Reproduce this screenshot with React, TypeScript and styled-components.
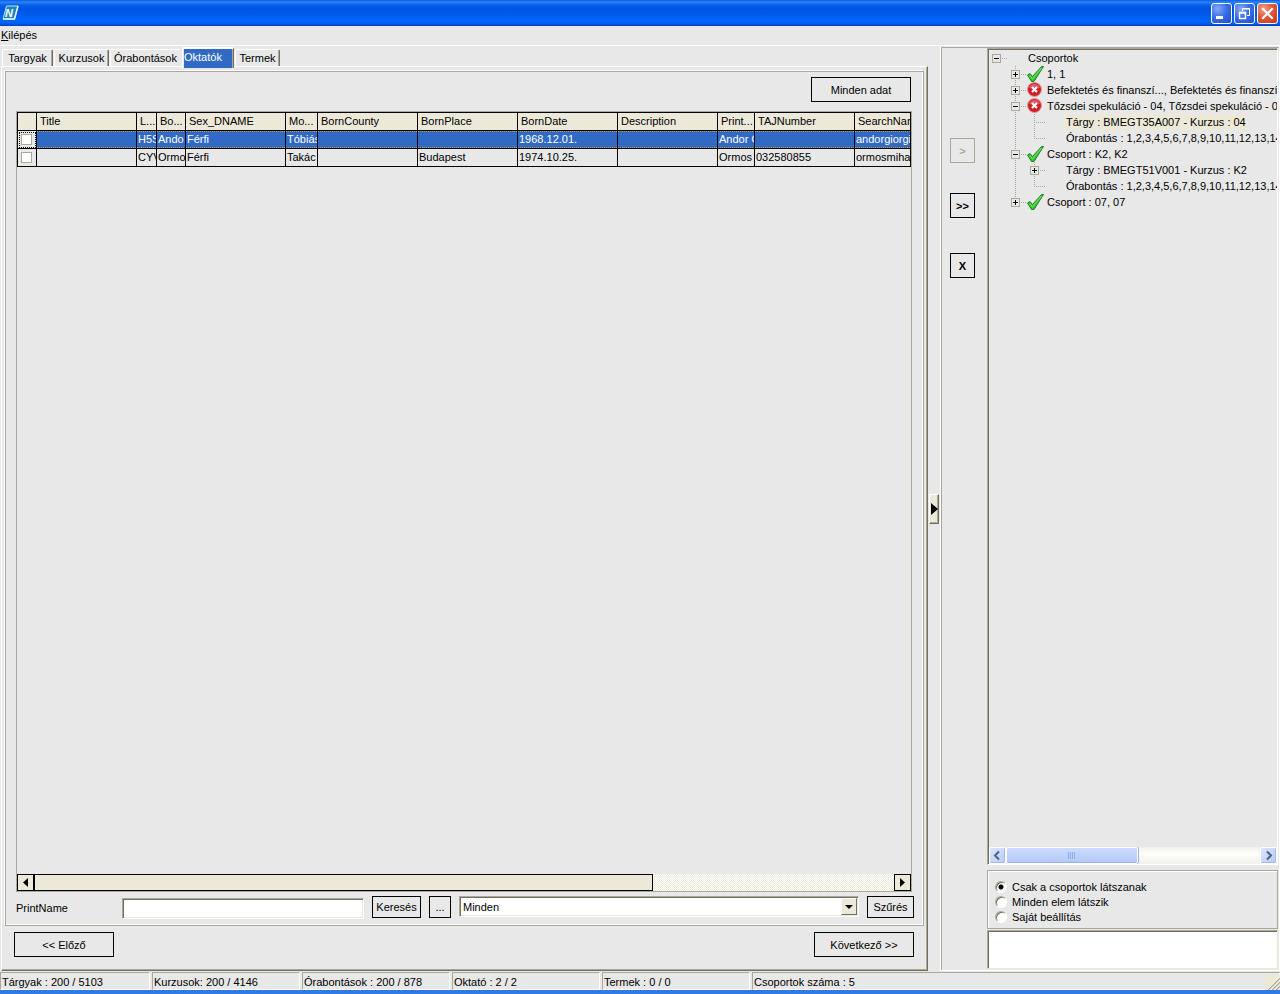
import React, { useState } from "react";
import styled, { createGlobalStyle, css } from "styled-components";

const c = {
  face: "#e8e8e8",
  beige: "#ece9d8",
  shadow: "#aca899",
  dark: "#716f64",
  blue: "#316ac5",
};

const Global = createGlobalStyle`
  * { box-sizing: border-box; }
  body { margin: 0; background: ${c.face}; }
  body, button, input, select, textarea {
    font-family: "Liberation Sans", Arial, sans-serif;
    font-size: 11px;
    line-height: 14px;
    color: #000;
  }
  button { padding: 0; margin: 0; }
`;

const Window = styled.div`
  display: flex;
  flex-direction: column;
  min-height: 100vh;
  overflow: hidden;
  background: ${c.face};
`;

/* ---------- title bar ---------- */

const TitleBar = styled.header`
  display: flex;
  align-items: center;
  gap: 2px;
  height: 26px;
  padding: 0 2px;
  background: linear-gradient(
    #0a5ae0 0%, #2c86fb 8%, #0a63ee 18%, #0054e3 32%, #0058ea 55%,
    #0066ff 78%, #0062f8 88%, #0040c4 100%
  );
`;

const Logo = styled.svg`
  width: 18px;
  height: 16px;
  margin-right: auto;
`;

const CaptionButton = styled.button<{ $close?: boolean }>`
  width: 21px;
  height: 21px;
  border: 1px solid #fff;
  border-radius: 3px;
  background: ${(p) =>
    p.$close
      ? "radial-gradient(circle at 30% 25%, #f0a08a, #e0573a 45%, #c8381a)"
      : "radial-gradient(circle at 30% 25%, #86a8f4, #3a6fe6 45%, #1c4ed0)"};
  svg { display: block; width: 19px; height: 19px; }
`;

const MenuBar = styled.nav`
  height: 20px;
  padding: 2px 1px;
  border-bottom: 1px solid #fff;
`;

const MenuItem = styled.button`
  border: 0;
  background: none;
`;

/* ---------- left side ---------- */

const Main = styled.main`
  display: flex;
  flex: 1;
`;

const LeftPane = styled.section`
  display: flex;
  flex-direction: column;
  flex: 1;
  min-width: 0;
  padding-left: 1px;
`;

const TabStrip = styled.div`
  display: flex;
  align-items: flex-end;
  gap: 1px;
  height: 20px;
  padding-left: 1px;
`;

const Tab = styled.button<{ $width: number; $active?: boolean; $flat?: boolean }>`
  width: ${(p) => p.$width}px;
  height: 17px;
  overflow: hidden;
  white-space: nowrap;
  background: ${c.face};
  border: solid;
  border-width: 1px 1px 0;
  border-color: #fff ${c.dark} #fff #fff;
  border-radius: 2px 2px 0 0;
  box-shadow: inset -1px 0 ${c.shadow};
  line-height: 17px;
  ${(p) => p.$flat && css`border-right-color: ${c.face}; box-shadow: none;`}
  ${(p) =>
    p.$active &&
    css`
      position: relative;
      height: 21px;
      margin-bottom: -2px;
      padding: 0 1px 3px;
      border-top-width: 2px;
      text-align: left;
      line-height: 16px;
      color: #fff;
      background: ${c.blue};
      box-shadow: inset 1px 0 ${c.face}, inset -1px 0 ${c.shadow};
    `}
`;

const TabPanel = styled.div`
  display: flex;
  flex-direction: column;
  flex: 1;
  padding: 3px 3px 13px 2px;
  border: 1px solid;
  border-color: #fff ${c.dark} ${c.dark} #fff;
  box-shadow: inset -1px -1px ${c.shadow};
`;

const Group = styled.div`
  display: flex;
  flex-direction: column;
  flex: 1;
  min-height: 0;
  padding: 6px 11px 0;
  border: 1px solid;
  border-color: #fff ${c.shadow} ${c.shadow} #fff;
  box-shadow: inset 1px 1px ${c.shadow}, inset -1px -1px #fff;
`;

const FlatButton = styled.button<{ $width: number; $height: number }>`
  flex: none;
  width: ${(p) => p.$width}px;
  height: ${(p) => p.$height}px;
  white-space: nowrap;
  border: 1px solid #000;
  background: ${c.face};
  &:disabled { color: ${c.shadow}; border-color: ${c.shadow}; }
`;

const GroupTop = styled.div`
  display: flex;
  justify-content: flex-end;
  padding: 0 1px 9px 0;
`;

const GridFrame = styled.div`
  display: flex;
  flex-direction: column;
  justify-content: space-between;
  flex: 1;
  border: 1px solid ${c.shadow};
`;

const Table = styled.table`
  width: 100%;
  table-layout: fixed;
  border-collapse: separate;
  border-spacing: 0;
  border: solid #000;
  border-width: 1px 0 0 1px;
`;

const Cell = styled.td`
  height: 18px;
  padding: 0 0 1px 1px;
  overflow: hidden;
  white-space: nowrap;
  text-align: left;
  font-weight: normal;
  border: solid #000;
  border-width: 0 1px 1px 0;
  line-height: 14px;
`;

const HeadCell = styled(Cell)`
  padding-left: 3px;
  background: ${c.beige};
`;

const Row = styled.tr<{ $selected?: boolean }>`
  ${(p) =>
    p.$selected &&
    css`
      ${Cell} {
        color: #fff;
        background:
          repeating-linear-gradient(90deg, #ce953a 0 1px, ${c.blue} 1px 2px) top / 100% 1px no-repeat,
          repeating-linear-gradient(90deg, #ce953a 0 1px, ${c.blue} 1px 2px) bottom / 100% 1px no-repeat,
          ${c.blue};
      }
      ${Cell}:first-child { background: ${c.face}; outline: 1px dotted #000; outline-offset: -2px; }
    `}
`;

const GridCheck = styled.input`
  appearance: none;
  display: block;
  width: 11px;
  height: 11px;
  margin: 1px 2px 0;
  border: 1px solid ${c.shadow};
  background: #fff;
`;

const GridScroll = styled.div`
  display: flex;
  height: 17px;
  background: repeating-conic-gradient(#fff 0 25%, ${c.beige} 0 50%) 0 0 / 2px 2px;
`;

const GridScrollTrack = styled.div`
  flex: 1;
`;

const GridScrollThumb = styled.div`
  width: 72%;
  height: 17px;
  border: 1px solid #000;
  background: ${c.beige};
`;

const GridScrollButton = styled.button`
  width: 17px;
  height: 17px;
  border: 1px solid #000;
  background: ${c.beige};
  svg { display: block; width: 15px; height: 15px; }
`;

const FilterRow = styled.div`
  display: flex;
  gap: 8px;
  height: 33px;
  margin-right: -2px;
  padding-top: 4px;
`;

const FieldLabel = styled.label`
  width: 98px;
  line-height: 24px;
`;

const sunken = css`
  border: 1px solid;
  border-color: ${c.shadow} #fff #fff ${c.shadow};
  box-shadow: inset 1px 1px ${c.dark}, inset -1px -1px ${c.beige};
`;

const TextInput = styled.input`
  ${sunken}
  flex: 1 1 242px;
  min-width: 0;
  height: 21px;
  margin-top: 2px;
  padding: 0 3px;
  background: #fff;
  outline: none;
`;

const SelectBox = styled.div`
  position: relative;
  flex: 1 1 400px;
  height: 21px;
`;

const Select = styled.select`
  ${sunken}
  appearance: none;
  width: 100%;
  height: 21px;
  padding: 0 20px 0 3px;
  background: #fff;
  border-radius: 0;
  outline: none;
`;

const SelectArrow = styled.svg`
  position: absolute;
  top: 2px;
  right: 2px;
  width: 16px;
  height: 17px;
  pointer-events: none;
  background: ${c.beige};
  border: 1px solid;
  border-color: #fff ${c.dark} ${c.dark} #fff;
`;

const PagerRow = styled.div`
  display: flex;
  justify-content: space-between;
  padding: 6px 10px 0;
`;

/* ---------- splitter ---------- */

const Splitter = styled.div`
  display: flex;
  align-items: center;
  width: 12px;
  padding-left: 1px;
`;

const SplitterKnob = styled.button`
  width: 10px;
  height: 30px;
  border: 1px solid;
  border-color: #fff ${c.dark} ${c.dark} #fff;
  background: ${c.beige};
  box-shadow: inset -1px -1px ${c.shadow};
  svg { display: block; width: 8px; height: 12px; }
`;

/* ---------- right side ---------- */

const RightPane = styled.section`
  display: flex;
  width: 340px;
  margin-top: 1px;
  border: solid #fff;
  border-width: 0 1px 1px;
  box-shadow: inset 1px 1px ${c.shadow};
  padding: 1px 1px 1px 0;
`;

const TransferColumn = styled.div`
  display: flex;
  flex-direction: column;
  align-items: center;
  width: 43px;
  padding: 90px 0 0;
`;

const TransferButton = styled(FlatButton)`
  font-weight: bold;
  & + & { margin-top: 30px; }
  & + & + & { margin-top: 35px; }
`;

const SideColumn = styled.div`
  display: flex;
  flex-direction: column;
  flex: 1;
  min-width: 0;
  padding-left: 3px;
`;

const TreeBox = styled.div`
  display: flex;
  flex-direction: column;
  justify-content: space-between;
  flex: 1;
  overflow: hidden;
  padding: 1px 0 0 1px;
  border: 1px solid;
  border-color: ${c.shadow} #fff #fff ${c.shadow};
  box-shadow: inset 1px 1px ${c.dark};
`;

const Tree = styled.ul`
  list-style: none;
  margin: 0;
  padding: 0;
  overflow: hidden;
`;

const TreeRow = styled.li`
  display: flex;
  align-items: center;
  height: 16px;
  white-space: nowrap;
`;

type Line = "none" | "full" | "top";

const Guide = styled.span<{ $line: Line; $branch?: boolean }>`
  position: relative;
  flex: none;
  width: 19px;
  height: 16px;
  background:
    ${(p) =>
      p.$branch
        ? `repeating-linear-gradient(90deg, ${c.shadow} 0 1px, transparent 1px 2px) 7px 8px / 11px 1px no-repeat`
        : "none"},
    ${(p) =>
      p.$line === "none"
        ? "none"
        : `repeating-linear-gradient(${c.shadow} 0 1px, transparent 1px 2px) 7px 0 / 1px ${
            p.$line === "full" ? 16 : 9
          }px no-repeat`};
`;

const Expander = styled.button`
  display: block;
  width: 9px;
  height: 9px;
  margin: 4px 3px 0;
  border: 1px solid ${c.shadow};
  background: ${c.face};
  svg { display: block; width: 7px; height: 7px; }
`;

const IconSlot = styled.span`
  flex: none;
  width: 17px;
  height: 16px;
  svg { display: block; width: 17px; height: 16px; }
`;

const TreeLabel = styled.span<{ $selected?: boolean }>`
  height: 16px;
  padding: 0 1px 0 3px;
  line-height: 16px;
  background: ${(p) => (p.$selected ? c.beige : "none")};
`;

const XpScroll = styled.div`
  display: flex;
  height: 17px;
  background: linear-gradient(#f0efe8, #fefefb 40%, #f2f1ea);
`;

const XpButton = styled.button`
  width: 17px;
  height: 17px;
  border: 1px solid #fff;
  border-radius: 2px;
  background: linear-gradient(135deg, #dbe6fe, #b9ccf8);
  box-shadow: inset -1px -1px #a5b9ec;
  svg { display: block; width: 15px; height: 15px; }
`;

const XpTrack = styled.div`
  flex: 1;
`;

const XpThumb = styled.div`
  display: flex;
  justify-content: center;
  align-items: center;
  width: 52%;
  height: 17px;
  border: 1px solid #fff;
  border-radius: 2px;
  background: linear-gradient(#cbdafd, #bed0fb 60%, #b4c8f6);
  box-shadow: 1px 0 #98b1e4, inset 0 -1px #98b1e4;
  svg { width: 8px; height: 7px; }
`;

const OptionBox = styled.fieldset`
  min-width: 0;
  height: 59px;
  margin: 5px 0 1px;
  padding: 8px 7px 0;
  border: 1px solid ${c.shadow};
  box-shadow: inset 1px 1px #fff;
`;

const Option = styled.label`
  display: flex;
  align-items: center;
  gap: 5px;
  height: 15px;
`;

const Radio = styled.input`
  appearance: none;
  width: 12px;
  height: 12px;
  margin: 0;
  border: 1px solid;
  border-color: ${c.shadow} #fff #fff ${c.shadow};
  border-radius: 50%;
  background: #fff;
  box-shadow: inset 1px 1px ${c.dark};
  &:checked { background: radial-gradient(circle, #000 0 2px, #fff 3px); }
`;

const Notes = styled.textarea`
  display: block;
  width: 100%;
  height: 39px;
  padding: 2px;
  resize: none;
  outline: none;
  border: 1px solid;
  border-color: ${c.shadow} ${c.beige} ${c.beige} ${c.shadow};
  box-shadow: inset 1px 1px ${c.dark};
  background: #fff;
`;

/* ---------- status bar ---------- */

const StatusBar = styled.footer`
  position: relative;
  display: flex;
  gap: 2px;
  height: 23px;
  padding-top: 1px;
  border-bottom: 4px solid #2f7ae5;
`;

const StatusCell = styled.div<{ $fill?: boolean }>`
  flex: ${(p) => (p.$fill ? "1" : "none")};
  width: 148px;
  padding: 1px 1px;
  line-height: 16px;
  white-space: nowrap;
  border: 1px solid;
  border-color: ${c.shadow} #fff #fff ${c.shadow};
  &:first-child { width: 150px; }
`;

const Grip = styled.svg`
  position: absolute;
  right: 0;
  bottom: 0;
  width: 15px;
  height: 15px;
  background: ${c.beige};
`;

/* ---------- data ---------- */

const tabs = [
  { name: "Targyak", width: 51 },
  { name: "Kurzusok", width: 55 },
  { name: "Órabontások", width: 71, flat: true },
  { name: "Oktatók", width: 52 },
  { name: "Termek", width: 45 },
];

const columns: { name: string; width?: number }[] = [
  { name: "Title", width: 100 },
  { name: "L...", width: 20 },
  { name: "Bo...", width: 29 },
  { name: "Sex_DNAME", width: 100 },
  { name: "Mo...", width: 32 },
  { name: "BornCounty", width: 100 },
  { name: "BornPlace", width: 100 },
  { name: "BornDate", width: 100 },
  { name: "Description", width: 100 },
  { name: "Print...", width: 37 },
  { name: "TAJNumber", width: 100 },
  { name: "SearchName" },
];

const rows = [
  ["", "H5S", "Ando", "Férfi", "Tóbiás", "", "", "1968.12.01.", "", "Andor G", "", "andorgiorgi"],
  ["", "CYV", "Ormo", "Férfi", "Takác", "", "Budapest", "1974.10.25.", "", "Ormos", "032580855", "ormosmihaj"],
];

type Node = {
  text: string;
  guides: Line[];
  box?: "+" | "-";
  icon?: "ok" | "error";
  selected?: boolean;
};

const lessons = "Órabontás : 1,2,3,4,5,6,7,8,9,10,11,12,13,14";

const nodes: Node[] = [
  { text: "Csoportok", guides: ["none"], box: "-" },
  { text: "1, 1", guides: ["none", "full"], box: "+", icon: "ok" },
  { text: "Befektetés és finanszí..., Befektetés és finanszír", guides: ["none", "full"], box: "+", icon: "error" },
  { text: "Tőzsdei spekuláció - 04, Tőzsdei spekuláció - 04", guides: ["none", "full"], box: "-", icon: "error" },
  { text: "Tárgy : BMEGT35A007 - Kurzus : 04", guides: ["none", "full", "full"], selected: true },
  { text: lessons, guides: ["none", "full", "top"] },
  { text: "Csoport : K2, K2", guides: ["none", "full"], box: "-", icon: "ok" },
  { text: "Tárgy : BMEGT51V001 - Kurzus : K2", guides: ["none", "full", "full"], box: "+" },
  { text: lessons, guides: ["none", "full", "top"] },
  { text: "Csoport : 07, 07", guides: ["none", "top"], box: "+", icon: "ok" },
];

const options = ["Csak a csoportok látszanak", "Minden elem látszik", "Saját beállítás"];

const status = [
  "Tárgyak : 200 / 5103",
  "Kurzusok: 200 / 4146",
  "Órabontások : 200 / 878",
  "Oktató : 2 / 2",
  "Termek : 0 / 0",
  "Csoportok száma : 5",
];

/* ---------- icons ---------- */

const OkIcon = () => (
  <svg viewBox="0 0 17 16" aria-hidden="true">
    <path d="M.5 9 3 7.500 5.500 10.500 14.500.5 16.500.5 7 15.500 4.500 15.500Z" fill="#2fbf2f" stroke="#14691a" strokeWidth=".8" strokeLinejoin="round" />
    <path d="M2.500 9.500 5.500 13 14.500 2" fill="none" stroke="#5fe052" strokeWidth="1.200" />
  </svg>
);

const ErrorIcon = () => (
  <svg viewBox="0 0 17 16" aria-hidden="true">
    <circle cx="7.500" cy="7.500" r="7" fill="#cf1f27" stroke="#d9a0a0" strokeWidth="1" />
    <path d="M2 5.500a6 6 0 0 1 11 0q-5.500 2.500-11 0Z" fill="#e4575c" />
    <path d="M5 5 10 10M10 5 5 10" stroke="#fff" strokeWidth="2.200" />
  </svg>
);

const Arrow = ({ left }: { left?: boolean }) => (
  <svg viewBox="0 0 15 15" aria-hidden="true">
    <path d={left ? "M10 3v9L5 7.500Z" : "M5 3v9l5-4.500Z"} fill="#000" />
  </svg>
);

const Chevron = ({ left }: { left?: boolean }) => (
  <svg viewBox="0 0 15 15" aria-hidden="true">
    <path d={left ? "M9 3.500 5 7.500l4 4" : "M6 3.500l4 4-4 4"} fill="none" stroke="#4d6185" strokeWidth="2" />
  </svg>
);

export default function App() {
  const [tab, setTab] = useState("Oktatók");
  const [option, setOption] = useState(options[0]);

  return (
    <Window>
      <Global />
      <TitleBar>
        <Logo viewBox="0 0 18 16" aria-hidden="true">
          <path d="M4.500 1H16L12.500 14H1Z" fill="#1a86b8" stroke="#bfe4f2" strokeWidth="1" />
          <path d="M1 14H12.500L16 1" fill="none" stroke="#e6f4fa" strokeWidth="1.500" />
          <text x="3" y="11.500" fontSize="11" fontWeight="bold" fontStyle="italic" fill="#fff">N</text>
        </Logo>
        <CaptionButton aria-label="Minimize">
          <svg viewBox="0 0 19 19"><path d="M4 12h7v3H4Z" fill="#fff" /></svg>
        </CaptionButton>
        <CaptionButton aria-label="Restore">
          <svg viewBox="0 0 19 19">
            <path d="M7.500 7V4.500h7v7H12M7 5h8" fill="none" stroke="#fff" />
            <path d="M4.500 8.500h6v6h-6ZM4 9h7" fill="none" stroke="#fff" strokeWidth="1.400" />
          </svg>
        </CaptionButton>
        <CaptionButton $close aria-label="Close">
          <svg viewBox="0 0 19 19"><path d="M5 5l9 9M14 5l-9 9" stroke="#fff" strokeWidth="2.200" strokeLinecap="square" /></svg>
        </CaptionButton>
      </TitleBar>

      <MenuBar>
        <MenuItem><u>K</u>ilépés</MenuItem>
      </MenuBar>

      <Main>
        <LeftPane>
          <TabStrip role="tablist">
            {tabs.map((t) => (
              <Tab
                key={t.name}
                role="tab"
                aria-selected={t.name === tab}
                $width={t.width}
                $flat={t.flat}
                $active={t.name === tab}
                onClick={() => setTab(t.name)}
              >
                {t.name}
              </Tab>
            ))}
          </TabStrip>
          <TabPanel role="tabpanel">
            <Group>
              <GroupTop>
                <FlatButton $width={100} $height={25}>Minden adat</FlatButton>
              </GroupTop>
              <GridFrame>
                <Table>
                  <colgroup>
                    <col width={19} />
                    {columns.map((col) => (
                      <col key={col.name} width={col.width} />
                    ))}
                  </colgroup>
                  <thead>
                    <tr>
                      <HeadCell as="th" />
                      {columns.map((col) => (
                        <HeadCell as="th" scope="col" key={col.name}>{col.name}</HeadCell>
                      ))}
                    </tr>
                  </thead>
                  <tbody>
                    {rows.map((r, i) => (
                      <Row key={r[1]} $selected={i === 0}>
                        <Cell><GridCheck type="checkbox" aria-label={r[9]} /></Cell>
                        {r.map((v, j) => (
                          <Cell key={j}>{v}</Cell>
                        ))}
                      </Row>
                    ))}
                  </tbody>
                </Table>
                <GridScroll>
                  <GridScrollButton aria-label="Scroll left"><Arrow left /></GridScrollButton>
                  <GridScrollTrack><GridScrollThumb /></GridScrollTrack>
                  <GridScrollButton aria-label="Scroll right"><Arrow /></GridScrollButton>
                </GridScroll>
              </GridFrame>
              <FilterRow>
                <FieldLabel htmlFor="print-name">PrintName</FieldLabel>
                <TextInput id="print-name" />
                <FlatButton $width={49} $height={22}>Keresés</FlatButton>
                <FlatButton $width={22} $height={22}>...</FlatButton>
                <SelectBox>
                  <Select aria-label="Szűrő">
                    <option>Minden</option>
                  </Select>
                  <SelectArrow viewBox="0 0 14 15" aria-hidden="true">
                    <path d="M3 6h8L7 10Z" fill="#000" />
                  </SelectArrow>
                </SelectBox>
                <FlatButton $width={47} $height={22}>Szűrés</FlatButton>
              </FilterRow>
            </Group>
            <PagerRow>
              <FlatButton $width={100} $height={25}>&lt;&lt; Előző</FlatButton>
              <FlatButton $width={100} $height={25}>Következő &gt;&gt;</FlatButton>
            </PagerRow>
          </TabPanel>
        </LeftPane>

        <Splitter>
          <SplitterKnob aria-label="Collapse panel">
            <svg viewBox="0 0 8 12"><path d="M1 0v12l7-6Z" fill="#000" /></svg>
          </SplitterKnob>
        </Splitter>

        <RightPane>
          <TransferColumn>
            <TransferButton $width={25} $height={25} disabled>&gt;</TransferButton>
            <TransferButton $width={25} $height={25}>&gt;&gt;</TransferButton>
            <TransferButton $width={25} $height={25}>X</TransferButton>
          </TransferColumn>
          <SideColumn>
            <TreeBox>
              <Tree>
                {nodes.map((n, i) => (
                  <TreeRow key={i}>
                    {n.guides.map((line, g) => {
                      const last = g === n.guides.length - 1;
                      return (
                        <Guide key={g} $line={line} $branch={last}>
                          {last && n.box && (
                            <Expander aria-label={n.box === "+" ? "Expand" : "Collapse"}>
                              <svg viewBox="0 0 7 7">
                                <path d={n.box === "+" ? "M1 3h5v1H1ZM3 1h1v5H3Z" : "M1 3h5v1H1Z"} fill="#000" />
                              </svg>
                            </Expander>
                          )}
                        </Guide>
                      );
                    })}
                    <IconSlot>
                      {n.icon === "ok" && <OkIcon />}
                      {n.icon === "error" && <ErrorIcon />}
                    </IconSlot>
                    <TreeLabel $selected={n.selected}>{n.text}</TreeLabel>
                  </TreeRow>
                ))}
              </Tree>
              <XpScroll>
                <XpButton aria-label="Scroll left"><Chevron left /></XpButton>
                <XpTrack>
                  <XpThumb>
                    <svg viewBox="0 0 8 7"><path d="M.5 0v7M2.500 0v7M4.500 0v7M6.500 0v7" stroke="#8cb0f8" /></svg>
                  </XpThumb>
                </XpTrack>
                <XpButton aria-label="Scroll right"><Chevron /></XpButton>
              </XpScroll>
            </TreeBox>
            <OptionBox>
              {options.map((o) => (
                <Option key={o}>
                  <Radio type="radio" name="view" checked={o === option} onChange={() => setOption(o)} />
                  {o}
                </Option>
              ))}
            </OptionBox>
            <Notes aria-label="Megjegyzés" />
          </SideColumn>
        </RightPane>
      </Main>

      <StatusBar>
        {status.map((s, i) => (
          <StatusCell key={s} $fill={i === status.length - 1}>{s}</StatusCell>
        ))}
        <Grip viewBox="0 0 15 15" aria-hidden="true">
          <path d="M3 15 15 3M7 15l8-8M11 15l4-4" stroke={c.shadow} strokeWidth="1.500" />
          <path d="M2 15 15 2M6 15l9-9M10 15l5-5" stroke="#fff" strokeWidth=".7" />
        </Grip>
      </StatusBar>
    </Window>
  );
}
